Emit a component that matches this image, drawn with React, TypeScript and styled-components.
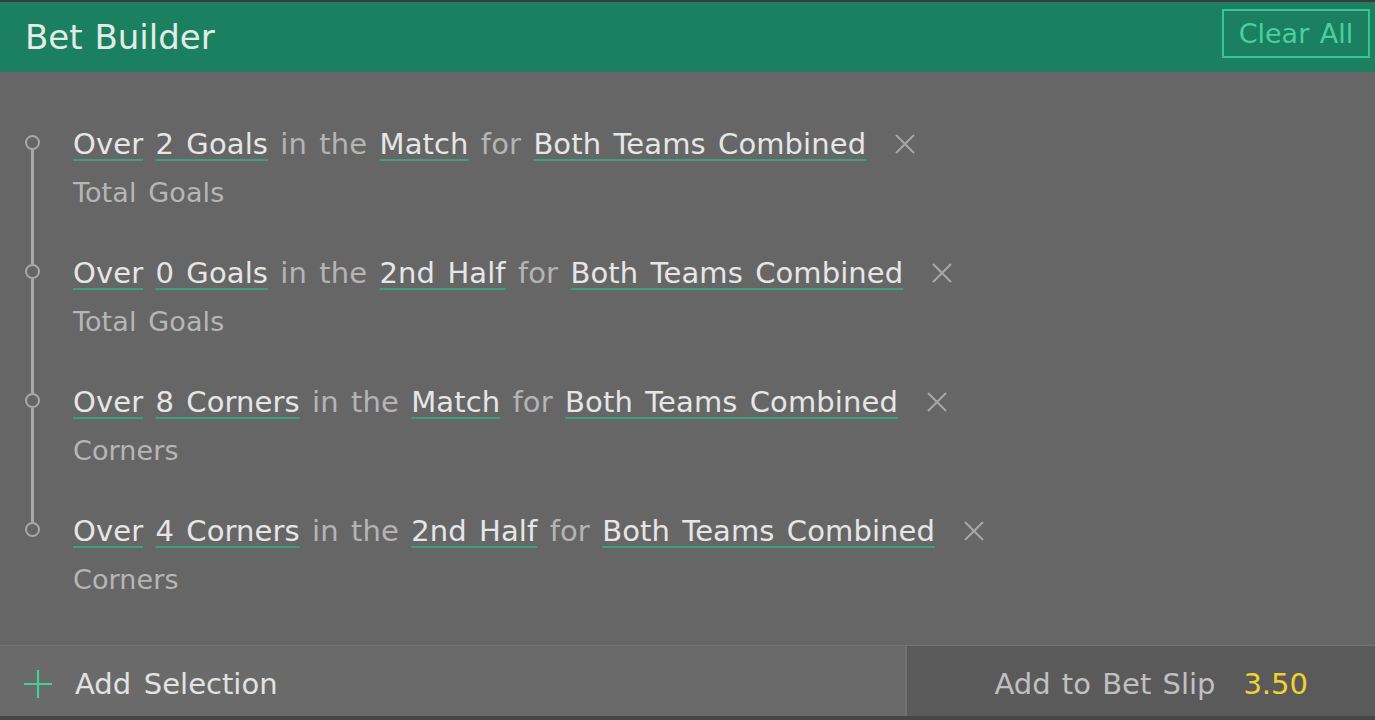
import React from "react";
import styled, { createGlobalStyle } from "styled-components";

const Global = createGlobalStyle`
  html, body { margin: 0; padding: 0; background: #666666; }
  body { font-family: "DejaVu Sans", Verdana, sans-serif; word-spacing: 3px; letter-spacing: 0.1px; }
  * { box-sizing: border-box; }
`;

const Page = styled.div`
  display: flex;
  flex-direction: column;
  width: 1375px;
  height: 720px;
  background: #666666;
  border-top: 2px solid #3b3b3b;
  border-bottom: 4px solid #464646;
  overflow: hidden;
`;

const Header = styled.header`
  display: flex;
  align-items: center;
  justify-content: space-between;
  height: 70px;
  flex: none;
  background: #1a8060;
  padding: 0 5px 0 25px;
`;

const Title = styled.h1`
  margin: 0;
  font-size: 34px;
  font-weight: normal;
  color: #e3ebe6;
  line-height: 40px;
  word-spacing: 1px;
  letter-spacing: 0;
`;

const ClearButton = styled.button`
  align-self: flex-start;
  margin-top: 7px;
  width: 148px;
  height: 49px;
  border: 2px solid #3cc393;
  background: transparent;
  color: #4bcf9e;
  font-family: inherit;
  font-size: 27px;
  word-spacing: 2px;
  padding: 0;
  cursor: pointer;
`;

const Body = styled.main`
  flex: 1;
  padding-top: 52px;
`;

const Selection = styled.section`
  display: grid;
  grid-template-columns: 64px 1fr;
  column-gap: 9px;
`;

const Marker = styled.div`
  display: flex;
  flex-direction: column;
  align-items: center;
`;

const Segment = styled.div<{ $hidden?: boolean; $grow?: boolean }>`
  width: 3px;
  height: ${(p) => (p.$grow ? "auto" : "10.5px")};
  flex: ${(p) => (p.$grow ? "1" : "none")};
  background: ${(p) => (p.$hidden ? "transparent" : "#a9a9a9")};
`;

const Ring = styled.div`
  width: 15px;
  height: 15px;
  flex: none;
  border: 2px solid #a9a9a9;
  border-radius: 50%;
`;

const Content = styled.div<{ $last?: boolean }>`
  padding-bottom: ${(p) => (p.$last ? "0" : "40px")};
`;

const Sentence = styled.div`
  font-size: 29px;
  line-height: 40px;
  white-space: nowrap;
  color: #b4b4b4;
`;

const Pick = styled.span`
  color: #e6e6e6;
  text-decoration: underline;
  text-decoration-color: #3c9f7f;
  text-decoration-thickness: 2px;
  text-underline-offset: 5px;
`;

const Joiner = styled.span`
  color: #b4b4b4;
`;

const RemoveButton = styled.button`
  display: inline-flex;
  vertical-align: -1px;
  margin-left: 28px;
  padding: 0;
  border: none;
  background: transparent;
  cursor: pointer;
`;

const Market = styled.div`
  margin-top: 9px;
  font-size: 27px;
  line-height: 40px;
  color: #b6b6b6;
`;

const Footer = styled.footer`
  display: flex;
  height: 71px;
  flex: none;
  border-top: 1px solid #747474;
`;

const AddSelection = styled.button`
  display: flex;
  align-items: center;
  gap: 23px;
  width: 907px;
  height: 100%;
  padding: 5px 0 0 24px;
  border: none;
  border-right: 2px solid #717171;
  background: #6a6a6a;
  color: #e2e2e2;
  font-family: inherit;
  font-size: 29px;
  word-spacing: 3.5px;
  cursor: pointer;
`;

const AddToSlip = styled.button`
  flex: 1;
  display: flex;
  align-items: center;
  justify-content: flex-end;
  gap: 28px;
  height: 100%;
  padding: 5px 67px 0 0;
  border: none;
  background: #5a5a5a;
  color: #c0c0c0;
  font-family: inherit;
  font-size: 29px;
  word-spacing: 2px;
  cursor: pointer;
`;

const Odds = styled.span`
  color: #f2d22c;
`;

type Sel = { line: string; amount: string; period: string; team: string; market: string };

const selections: Sel[] = [
  { line: "Over", amount: "2 Goals", period: "Match", team: "Both Teams Combined", market: "Total Goals" },
  { line: "Over", amount: "0 Goals", period: "2nd Half", team: "Both Teams Combined", market: "Total Goals" },
  { line: "Over", amount: "8 Corners", period: "Match", team: "Both Teams Combined", market: "Corners" },
  { line: "Over", amount: "4 Corners", period: "2nd Half", team: "Both Teams Combined", market: "Corners" },
];

const CloseIcon = () => (
  <svg width="22" height="22" viewBox="0 0 22 22">
    <path d="M2 2 L20 20 M20 2 L2 20" stroke="#a8a8a8" strokeWidth="2" fill="none" />
  </svg>
);

const PlusIcon = () => (
  <svg width="28" height="28" viewBox="0 0 28 28">
    <path d="M14 0 V28 M0 14 H28" stroke="#3fd09c" strokeWidth="2.2" fill="none" />
  </svg>
);

export default function App() {
  return (
    <>
      <Global />
      <Page>
        <Header>
          <Title>Bet Builder</Title>
          <ClearButton>Clear All</ClearButton>
        </Header>
        <Body>
          {selections.map((s, i) => {
            const first = i === 0;
            const last = i === selections.length - 1;
            return (
              <Selection key={i}>
                <Marker>
                  <Segment $hidden={first} />
                  <Ring />
                  <Segment $hidden={last} $grow />
                </Marker>
                <Content $last={last}>
                  <Sentence>
                    <Pick>{s.line}</Pick> <Pick>{s.amount}</Pick> <Joiner>in the</Joiner>{" "}
                    <Pick>{s.period}</Pick> <Joiner>for</Joiner> <Pick>{s.team}</Pick>
                    <RemoveButton aria-label="Remove">
                      <CloseIcon />
                    </RemoveButton>
                  </Sentence>
                  <Market>{s.market}</Market>
                </Content>
              </Selection>
            );
          })}
        </Body>
        <Footer>
          <AddSelection>
            <PlusIcon />
            <span>Add Selection</span>
          </AddSelection>
          <AddToSlip>
            <span>Add to Bet Slip</span>
            <Odds>3.50</Odds>
          </AddToSlip>
        </Footer>
      </Page>
    </>
  );
}
